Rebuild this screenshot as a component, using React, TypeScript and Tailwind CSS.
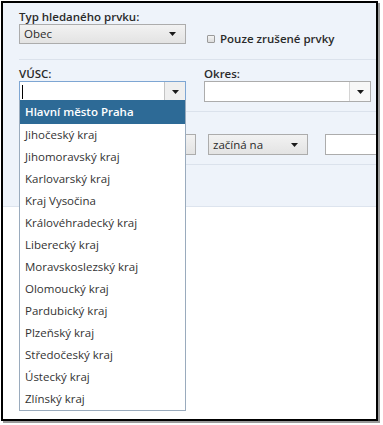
import React from "react";

const Arrow = () => (
  <svg width="7" height="4" viewBox="0 0 7 4" className="block">
    <path d="M0 0 H7 L3.5 4 Z" fill="#1a1a1a" />
  </svg>
);

const items = [
  "Jihočeský kraj",
  "Jihomoravský kraj",
  "Karlovarský kraj",
  "Kraj Vysočina",
  "Královéhradecký kraj",
  "Liberecký kraj",
  "Moravskoslezský kraj",
  "Olomoucký kraj",
  "Pardubický kraj",
  "Plzeňský kraj",
  "Středočeský kraj",
  "Ústecký kraj",
  "Zlínský kraj",
];

export default function App() {
  return (
    <div
      className="w-[383px] h-[425px] bg-white relative text-[11.5px] text-[#2a2a2a]"
      style={{ fontFamily: '"Open Sans", "Noto Sans", sans-serif' }}
    >
      <div className="absolute left-[1px] top-[1px] w-[377px] h-[420px] border-2 border-black shadow-[2px_2px_0_#9a9a9a] overflow-hidden bg-white">
        <div className="h-[204px] bg-[#eef3fa] border-b border-[#dde4ee] pt-[7px]">
          {/* Row 1 */}
          <div className="pl-[16px] flex">
            <div className="w-[167px] shrink-0">
              <div className="h-[14px] leading-[14px] font-semibold">Typ hledaného prvku:</div>
              <div className="h-[20px] border border-[#acacac] bg-gradient-to-b from-[#f2f2f2] to-[#e3e3e3] flex items-center justify-between pl-[4px] pr-[9px]">
                <span>Obec</span>
                <Arrow />
              </div>
            </div>
            <div className="ml-[21px] mt-[22px] flex items-center h-[14px]">
              <div className="w-[8px] h-[8px] border border-[#9a9a9a] bg-gradient-to-b from-[#f4f4f4] to-[#dcdcdc] rounded-[1px]" />
              <span className="ml-[5px] font-semibold">Pouze zrušené prvky</span>
            </div>
          </div>
          <div className="ml-[16px] mt-[13px] h-px bg-[#dbe2ec]" />
          {/* Row 2 */}
          <div className="pl-[16px] flex gap-[18px] mt-[6px]">
            <div className="w-[167px] shrink-0">
              <div className="h-[15px] leading-[15px] font-semibold">VÚSC:</div>
              <div className="h-[21px] border border-[#7ea6d3] bg-white flex">
                <div className="flex-1 flex items-center pl-[2px]">
                  <div className="w-px h-[14px] bg-black" />
                </div>
                <div className="w-[21px] border-l border-[#c4c4c4] bg-[#efefef] flex items-center justify-center">
                  <Arrow />
                </div>
              </div>
            </div>
            <div className="w-[167px] shrink-0">
              <div className="h-[15px] leading-[15px] font-semibold">Okres:</div>
              <div className="h-[21px] border border-[#acacac] bg-white flex">
                <div className="flex-1" />
                <div className="w-[21px] border-l border-[#d4d4d4] bg-[#f7f7f7] flex items-center justify-center">
                  <Arrow />
                </div>
              </div>
            </div>
          </div>
          <div className="ml-[16px] mt-[9px] h-px bg-[#dbe2ec]" />
          {/* Row 3 */}
          <div className="pl-[16px] flex mt-[22px]">
            <div className="w-[177px] shrink-0 h-[21px] border border-[#acacac] bg-gradient-to-b from-[#f2f2f2] to-[#e3e3e3]" />
            <div className="ml-[12px] w-[100px] shrink-0 h-[21px] border border-[#acacac] bg-gradient-to-b from-[#f2f2f2] to-[#e3e3e3] flex items-center justify-between pl-[4px] pr-[9px]">
              <span>začíná na</span>
              <Arrow />
            </div>
            <div className="ml-[17px] w-[80px] h-[21px] border border-[#acacac] bg-white shrink-0" />
          </div>
          <div className="ml-[16px] mt-[9px] h-px bg-[#dbe2ec]" />
        </div>

        {/* Dropdown list */}
        <div className="absolute left-[16px] top-[97px] w-[167px] border border-t-0 border-[#9aabbd] bg-white">
          <div className="h-[24px] bg-[#2d6a96] text-white font-semibold flex items-center pl-[5px]">
            Hlavní město Praha
          </div>
          {items.map((t) => (
            <div key={t} className="h-[22px] flex items-center pl-[5px] text-[#333]">
              {t}
            </div>
          ))}
        </div>
      </div>
    </div>
  );
}
